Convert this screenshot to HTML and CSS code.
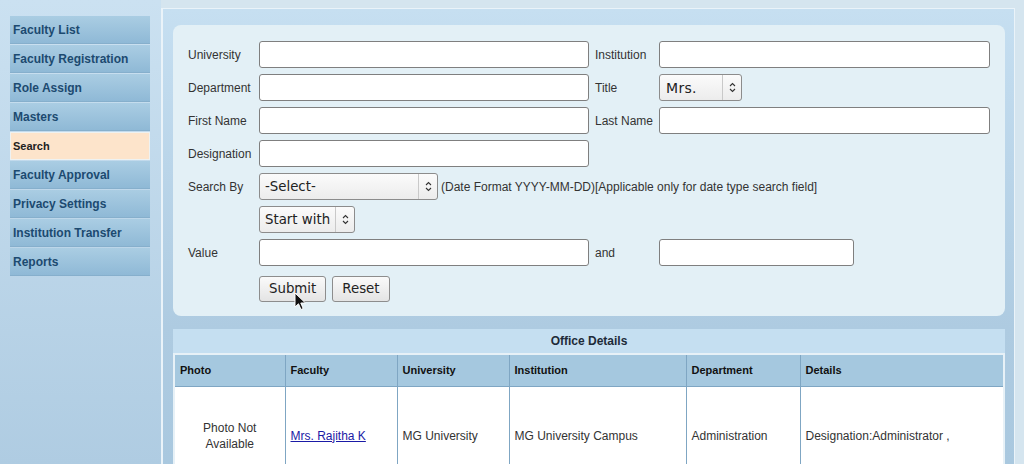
FILE: index.html
```html
<!DOCTYPE html>
<html>
<head>
<meta charset="utf-8">
<title>Search</title>
<link rel="stylesheet" href="styles.css">
</head>
<body>
<div class="layout">
  <nav class="sidebar">
    <a class="menu-item">Faculty List</a>
    <a class="menu-item">Faculty Registration</a>
    <a class="menu-item">Role Assign</a>
    <a class="menu-item">Masters</a>
    <a class="menu-item active">Search</a>
    <a class="menu-item">Faculty Approval</a>
    <a class="menu-item">Privacy Settings</a>
    <a class="menu-item">Institution Transfer</a>
    <a class="menu-item">Reports</a>
  </nav>
  <main class="main">
    <form class="panel">
      <div class="form-grid">
        <label class="lbl">University</label>
        <input class="field" type="text">
        <label class="lbl">Institution</label>
        <input class="field" type="text">

        <label class="lbl">Department</label>
        <input class="field" type="text">
        <label class="lbl">Title</label>
        <div class="cell"><div class="select sel-title"><span class="sel-value">Mrs.</span><span class="sel-arrow"><svg width="7" height="11" viewBox="0 0 7 11"><path d="M1 4 L3.5 1.5 L6 4 M1 7 L3.5 9.5 L6 7" fill="none" stroke="#333" stroke-width="1.1"/></svg></span></div></div>

        <label class="lbl">First Name</label>
        <input class="field" type="text">
        <label class="lbl">Last Name</label>
        <input class="field" type="text">

        <label class="lbl">Designation</label>
        <input class="field" type="text">
        <div class="cell span2"></div>

        <label class="lbl">Search By</label>
        <div class="cell span3 inline">
          <div class="select sel-search"><span class="sel-value">-Select-</span><span class="sel-arrow"><svg width="7" height="11" viewBox="0 0 7 11"><path d="M1 4 L3.5 1.5 L6 4 M1 7 L3.5 9.5 L6 7" fill="none" stroke="#333" stroke-width="1.1"/></svg></span></div>
          <span class="hint">(Date Format YYYY-MM-DD)[Applicable only for date type search field]</span>
        </div>

        <div class="lbl"></div>
        <div class="cell span3"><div class="select sel-start"><span class="sel-value">Start with</span><span class="sel-arrow"><svg width="7" height="11" viewBox="0 0 7 11"><path d="M1 4 L3.5 1.5 L6 4 M1 7 L3.5 9.5 L6 7" fill="none" stroke="#333" stroke-width="1.1"/></svg></span></div></div>

        <label class="lbl">Value</label>
        <input class="field" type="text">
        <label class="lbl">and</label>
        <div class="cell"><input class="field field-short" type="text"></div>

        <div class="lbl"></div>
        <div class="cell span3 buttons">
          <button type="button" class="btn">Submit</button>
          <button type="button" class="btn">Reset</button>
          <svg class="cursor" width="13" height="20" viewBox="0 0 13 20"><path d="M1 1 L1 15 L4.5 11.8 L7 17.5 L9.2 16.5 L6.8 11 L11.5 11 Z" fill="#111" stroke="#fff" stroke-width="1"/></svg>
        </div>
      </div>
    </form>

    <section class="results">
      <div class="caption">Office Details</div>
      <table class="grid">
        <colgroup>
          <col style="width:111px"><col style="width:112px"><col style="width:112px"><col style="width:177px"><col style="width:114px"><col>
        </colgroup>
        <thead>
          <tr><th>Photo</th><th>Faculty</th><th>University</th><th>Institution</th><th>Department</th><th>Details</th></tr>
        </thead>
        <tbody>
          <tr>
            <td class="photo">Photo Not<br>Available</td>
            <td><a class="link" href="#">Mrs. Rajitha K</a></td>
            <td>MG University</td>
            <td>MG University Campus</td>
            <td>Administration</td>
            <td>Designation:Administrator ,</td>
          </tr>
        </tbody>
      </table>
    </section>
  </main>
</div>
</body>
</html>
```

FILE: styles.css
```css
* { box-sizing: border-box; }
html, body {
  margin: 0;
  padding: 0;
  height: 464px;
  overflow: hidden;
}
body {
  background: #d5e5ef;
  font-family: "Liberation Sans", Arial, sans-serif;
  font-size: 12px;
  color: #333;
}
.layout {
  display: flex;
  align-items: flex-start;
  height: 464px;
}
.sidebar {
  width: 161px;
  height: 464px;
  flex: none;
  background: linear-gradient(#cbe1f1, #afcce2);
  padding: 16px 0 0 10px;
  display: flex;
  flex-direction: column;
}
.menu-item {
  display: flex;
  align-items: center;
  width: 140px;
  height: 28px;
  margin-bottom: 1px;
  padding-left: 3px;
  background: linear-gradient(#aacde3, #8fb9d6);
  border-bottom: 1px solid #86afcc;
  color: #1c4a70;
  font-weight: bold;
  font-size: 12px;
  cursor: pointer;
}
.menu-item.active {
  background: #fde4cb;
  border: 1px solid #eef2f2;
  padding-left: 2px;
  color: #222;
  font-size: 11px;
}
.main {
  width: 854px;
  height: 456px;
  margin-top: 8px;
  border-top: 1px solid #eaf3f9;
  border-left: 2px solid #eaf3f9;
  border-right: 1px solid #eaf3f9;
  background: linear-gradient(#c6dff1, #aecbe1 70%, #a9c8df);
  padding: 16px 9px 0 10px;
}
.panel {
  background: #e3f0f6;
  border-radius: 8px;
  padding: 16px 15px 15px 15px;
  height: 291px;
}
.form-grid {
  display: grid;
  grid-template-columns: 71px 336px 64px 1fr;
  grid-auto-rows: 27px;
  row-gap: 6px;
  align-items: center;
}
.lbl {
  color: #333;
  font-size: 12px;
  white-space: nowrap;
}
.cell { display: flex; align-items: center; height: 27px; }
.span2 { grid-column: span 2; }
.span3 { grid-column: span 3; }
.inline { gap: 3px; }
.field {
  width: 330px;
  height: 27px;
  border: 1px solid #7f7f7f;
  border-radius: 3px;
  background: #fff;
  margin: 0;
  padding: 2px 4px;
  font: 13.33px "DejaVu Sans", sans-serif;
}
.form-grid > .field:nth-child(4n) { width: 331px; }
.field-short { width: 195px !important; }
.select {
  display: flex;
  align-items: stretch;
  height: 27px;
  border: 1px solid #8c8c8c;
  border-radius: 3px;
  background: linear-gradient(#fbfbfb, #ececec);
  font: 13.33px "DejaVu Sans", sans-serif;
  color: #222;
}
.sel-value {
  flex: 1;
  display: flex;
  align-items: center;
  padding-left: 5px;
  white-space: nowrap;
}
.sel-arrow {
  width: 19px;
  display: flex;
  align-items: center;
  justify-content: center;
  border-left: 1px solid #c9c9c9;
}
.sel-title { width: 83px; }
.sel-title .sel-value { padding-left: 6px; font-size: 14px; letter-spacing: 0.3px; }
.sel-search { width: 179px; }
.sel-start { width: 96px; }
.hint { font-size: 12px; color: #333; white-space: nowrap; }
.buttons {
  position: relative;
  gap: 6px;
  margin-top: 6px;
  height: 26px;
}
.btn {
  height: 26px;
  margin: 0;
  padding: 0 9px;
  border: 1px solid #8d8d8d;
  border-radius: 3px;
  background: linear-gradient(#fafafa, #e4e4e4);
  font: 13.33px "DejaVu Sans", sans-serif;
  color: #222;
}
.cursor {
  position: absolute;
  left: 35px;
  top: 16px;
}
.results {
  margin-top: 13px;
}
.caption {
  height: 24px;
  background: #c5dff1;
  display: flex;
  align-items: center;
  justify-content: center;
  font-weight: bold;
  color: #1d2b39;
  font-size: 12px;
}
.grid {
  width: 100%;
  border-collapse: collapse;
  border: 2px solid #e7f1f7;
  table-layout: fixed;
}
.grid th {
  height: 32px;
  background: #a5c8df;
  text-align: left;
  font-size: 11px;
  font-weight: bold;
  color: #111;
  padding: 0 5px;
  border-right: 1px solid #7fa6c3;
  border-bottom: 1px solid #7fa6c3;
}
.grid td {
  height: 100px;
  background: #fff;
  padding: 0 5px;
  font-size: 12px;
  color: #333;
  border-right: 1px solid #7fa6c3;
  line-height: 16px;
}
.grid td.photo { text-align: center; padding-top: 1px; }
.link { color: #1a1aa6; text-decoration: underline; }
```
